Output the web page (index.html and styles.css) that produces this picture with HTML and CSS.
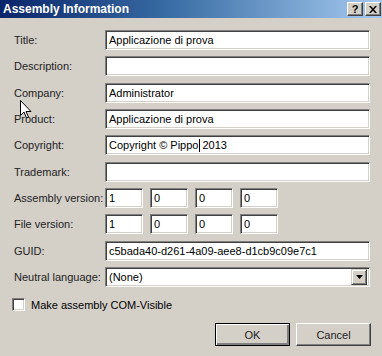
FILE: index.html
```html
<!DOCTYPE html>
<html lang="en">
<head>
    <meta charset="UTF-8">
    <title>Assembly Information</title>
    <link rel="stylesheet" href="styles.css">
</head>
<body>
    <div class="window">
        <!-- Titelleiste -->
        <div class="titlebar">
            <span class="title">Assembly Information</span>
            <div class="caption-buttons">
                <div class="caption-btn">?</div>
                <div class="caption-btn close">
                    <svg width="8" height="7" viewBox="0 0 8 7"><path d="M0 0h2l2 2.5L6 0h2L5 3.5 8 7H6L4 4.5 2 7H0l3-3.5z" fill="#000"/></svg>
                </div>
            </div>
        </div>

        <div class="form">
            <label>Title:</label>
            <div class="textbox">Applicazione di prova</div>

            <label>Description:</label>
            <div class="textbox"></div>

            <label>Company:</label>
            <div class="textbox">Administrator</div>

            <label>Product:</label>
            <div class="textbox">Applicazione di prova</div>

            <label>Copyright:</label>
            <div class="textbox">Copyright © Pippo<span class="caret"></span>2013</div>

            <label>Trademark:</label>
            <div class="textbox"></div>

            <label>Assembly version:</label>
            <div class="versions">
                <div class="textbox">1</div>
                <div class="textbox">0</div>
                <div class="textbox">0</div>
                <div class="textbox">0</div>
            </div>

            <label>File version:</label>
            <div class="versions">
                <div class="textbox">1</div>
                <div class="textbox">0</div>
                <div class="textbox">0</div>
                <div class="textbox">0</div>
            </div>

            <label>GUID:</label>
            <div class="textbox">c5bada40-d261-4a09-aee8-d1cb9c09e7c1</div>

            <label>Neutral language:</label>
            <div class="textbox combo">
                <span>(None)</span>
                <div class="combo-btn">
                    <svg width="7" height="4" viewBox="0 0 7 4"><path d="M0 0h7L3.5 4z" fill="#000"/></svg>
                </div>
            </div>
        </div>

        <div class="check-row">
            <div class="checkbox"></div>
            <span>Make assembly COM-Visible</span>
        </div>

        <div class="buttons">
            <div class="button default">OK</div>
            <div class="button">Cancel</div>
        </div>

        <!-- Mauszeiger -->
        <svg class="cursor" width="12" height="19" viewBox="0 0 12 19">
            <path d="M0.5 0.5v15l3.5-3.5 2.5 6 2-1-2.5-5.5h5z" fill="#fff" stroke="#000" stroke-width="1"/>
        </svg>
    </div>
</body>
</html>
```

FILE: styles.css
```css
body {
    margin: 0;
    font-family: "Liberation Sans", Arial, sans-serif;
    font-size: 11px;
    color: #000;
}
.window {
    position: relative;
    width: 382px;
    height: 356px;
    background: #d4d0c8;
    overflow: hidden;
}
.titlebar {
    height: 18px;
    background: linear-gradient(to right, #0a246a, #3a6ea5 45%, #a6caf0);
    display: flex;
    align-items: center;
    justify-content: space-between;
    padding: 0 1px 0 3px;
}
.title {
    color: #fff;
    font-weight: bold;
    font-size: 12px;
}
.caption-buttons {
    display: flex;
    gap: 2px;
}
.caption-btn {
    width: 14px;
    height: 12px;
    background: #d4d0c8;
    border: 1px solid;
    border-color: #fff #404040 #404040 #fff;
    box-shadow: inset -1px -1px 0 #808080;
    display: flex;
    align-items: center;
    justify-content: center;
    font-weight: bold;
    font-size: 11px;
    line-height: 1;
}
.form {
    display: grid;
    grid-template-columns: 91px 265px;
    row-gap: 6.35px;
    padding: 12px 0 0 14px;
    align-items: center;
}
.form label {
    color: #222;
}
.textbox {
    height: 18px;
    background: #fff;
    border: 1px solid;
    border-color: #808080 #fff #fff #808080;
    box-shadow: inset 1px 1px 0 #404040, inset -1px -1px 0 #d4d0c8;
    padding: 0 3px;
    display: flex;
    align-items: center;
    white-space: nowrap;
}
.caret {
    display: inline-block;
    width: 1px;
    height: 13px;
    background: #000;
    margin: 0 2px 0 1px;
}
.versions {
    display: flex;
    gap: 7px;
}
.versions .textbox {
    width: 30px;
}
.combo {
    justify-content: space-between;
    padding-right: 2px;
}
.combo-btn {
    width: 14px;
    height: 14px;
    background: #d4d0c8;
    border: 1px solid;
    border-color: #d4d0c8 #404040 #404040 #d4d0c8;
    box-shadow: inset 1px 1px 0 #fff, inset -1px -1px 0 #808080;
    display: flex;
    align-items: center;
    justify-content: center;
}
.check-row {
    display: flex;
    align-items: center;
    gap: 6px;
    margin: 11px 0 0 12px;
}
.checkbox {
    width: 11px;
    height: 11px;
    background: #fff;
    border: 1px solid;
    border-color: #808080 #fff #fff #808080;
    box-shadow: inset 1px 1px 0 #404040, inset -1px -1px 0 #d4d0c8;
}
.buttons {
    display: flex;
    justify-content: flex-end;
    gap: 6px;
    margin: 12px 11px 0 0;
}
.button {
    width: 73px;
    height: 21px;
    background: #d4d0c8;
    border: 1px solid;
    border-color: #fff #404040 #404040 #fff;
    box-shadow: inset -1px -1px 0 #808080;
    display: flex;
    align-items: center;
    justify-content: center;
    color: #222;
}
.button.default {
    outline: 1px solid #000;
    outline-offset: -1px;
    box-shadow: inset 1px 1px 0 #fff, inset -2px -2px 0 #808080;
}
.cursor {
    position: absolute;
    left: 20px;
    top: 100px;
}
```
